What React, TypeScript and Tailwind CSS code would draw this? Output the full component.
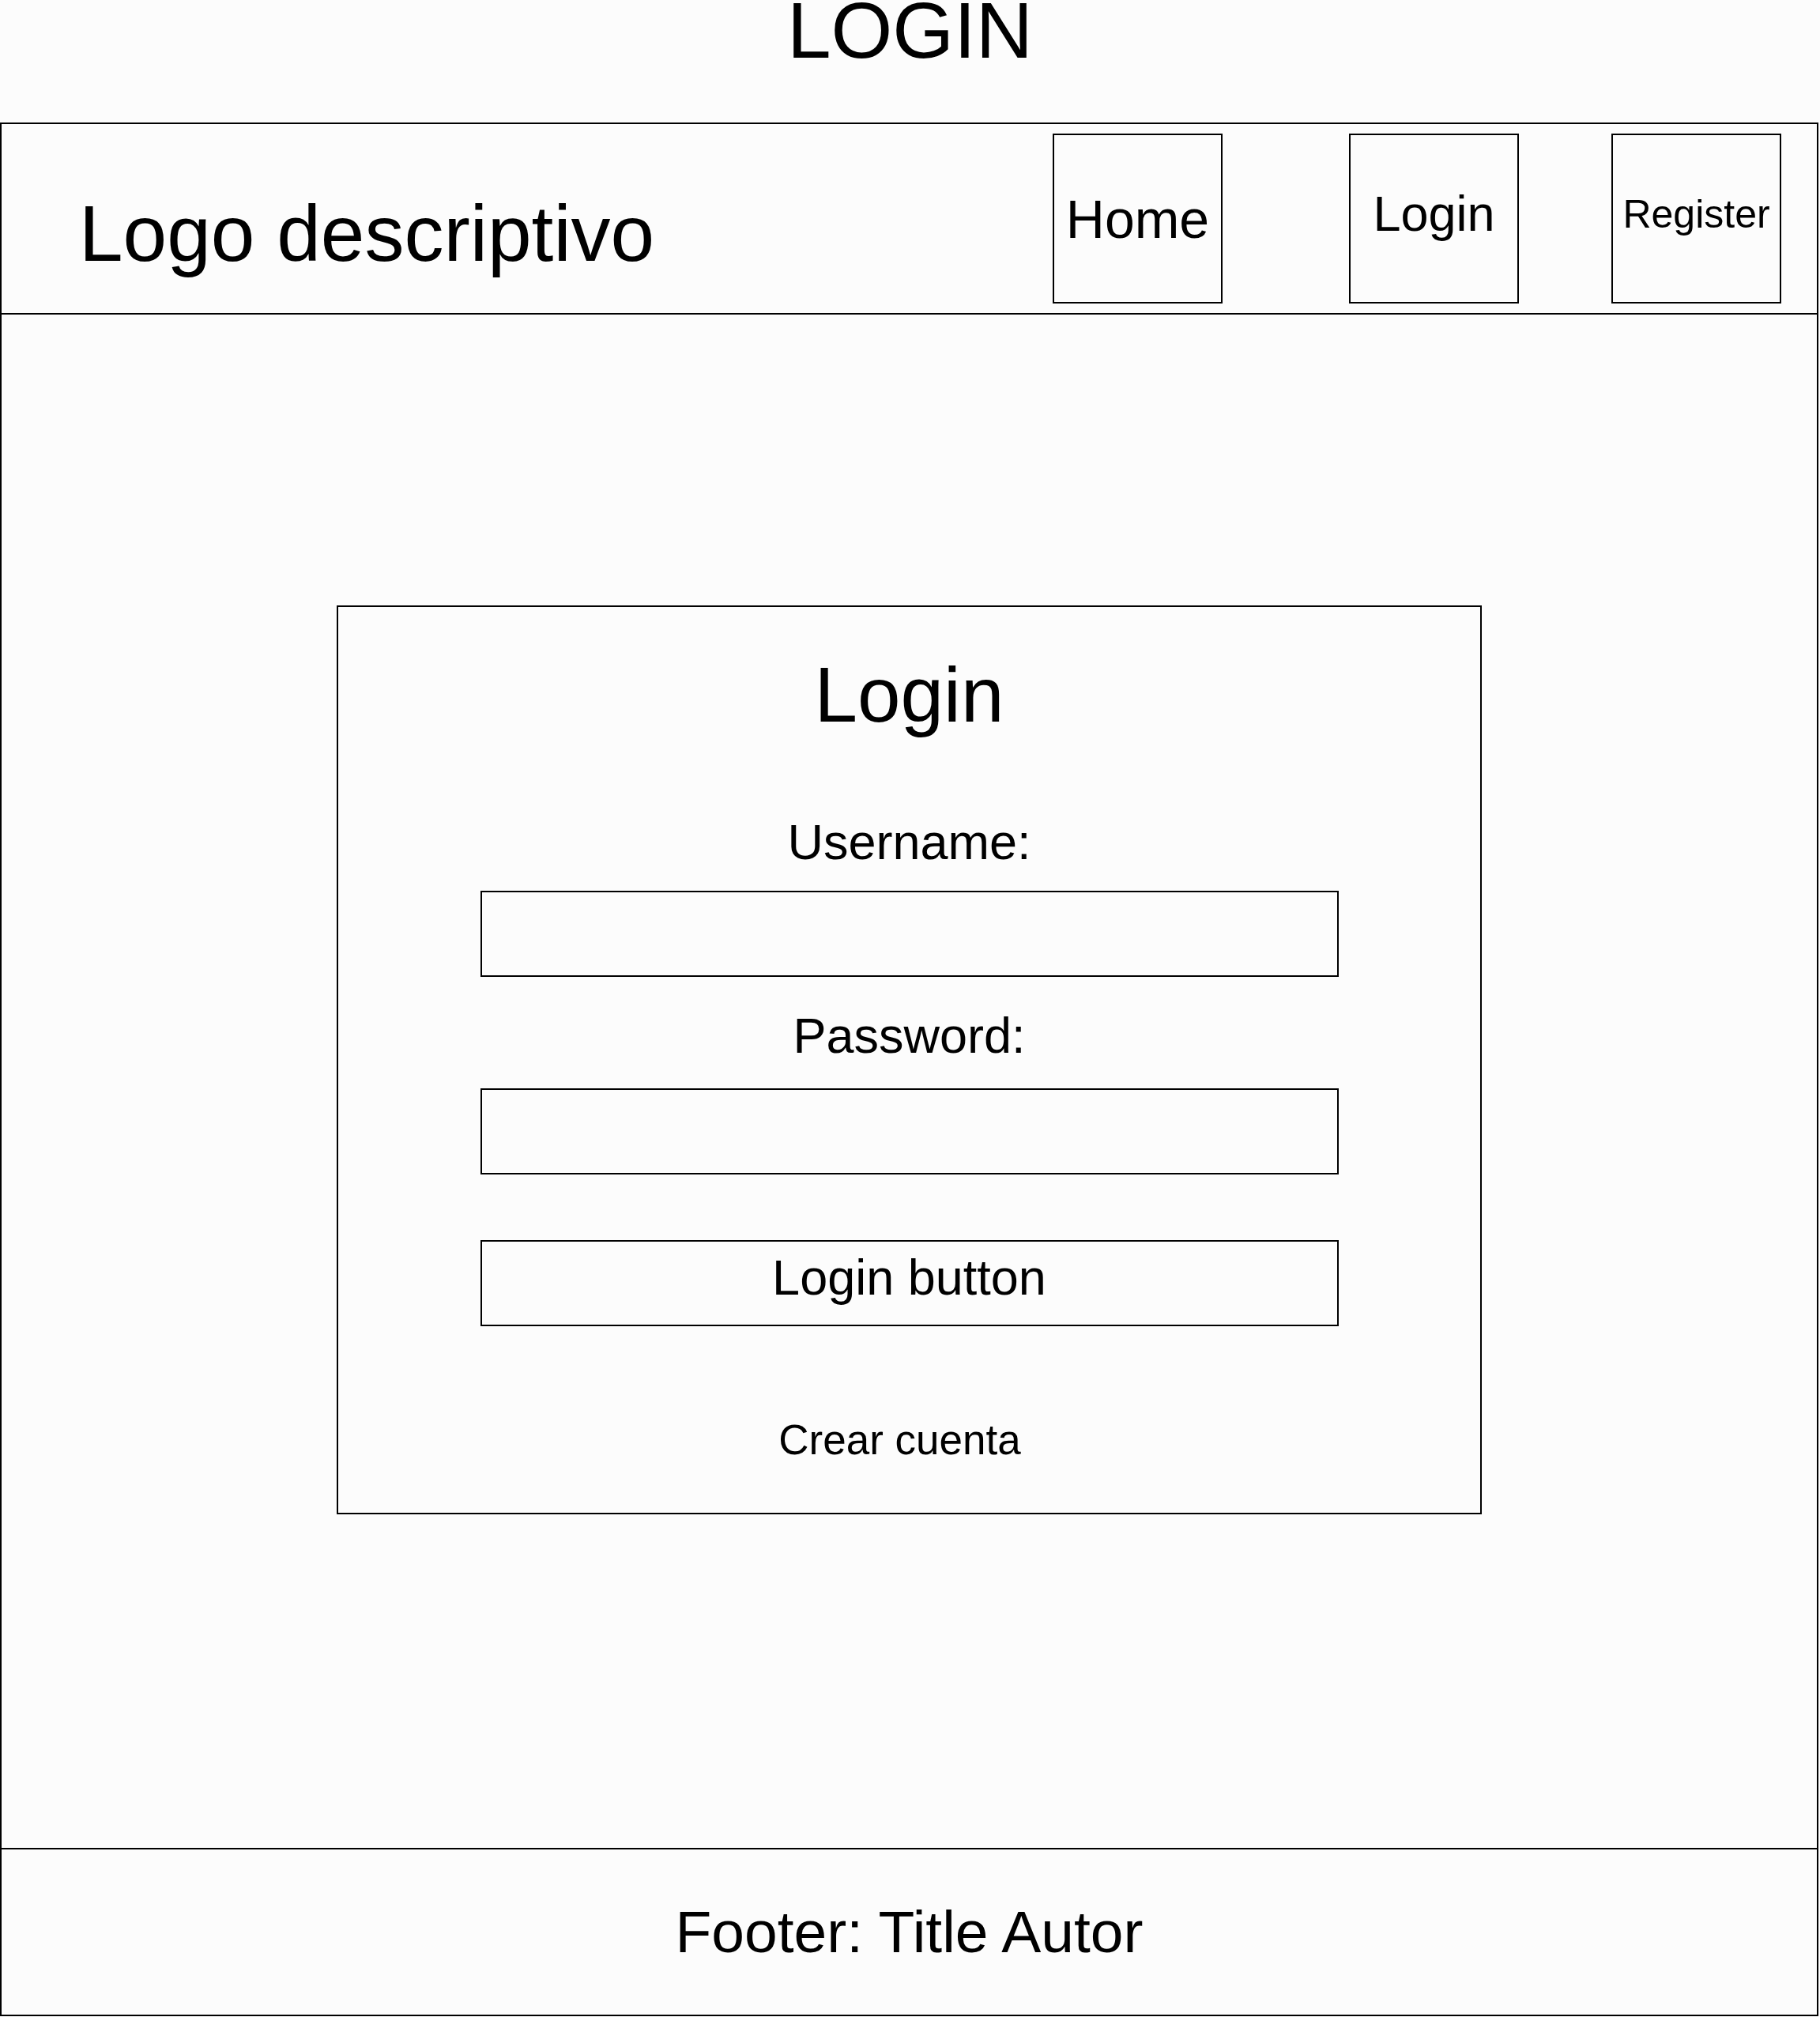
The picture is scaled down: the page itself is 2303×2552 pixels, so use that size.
const font = "font-['Liberation_Sans',Arial,sans-serif]";

function NavBox({ label, size, lift }: { label: string; size: string; lift?: boolean }) {
  return (
    <div
      className={`mt-[12px] flex h-[215px] w-[215px] shrink-0 items-center justify-center border-2 border-black ${
        lift ? "pb-[12px]" : ""
      }`}
    >
      <span className={`${size} leading-none`}>{label}</span>
    </div>
  );
}

function Field() {
  return <div className="h-[109px] w-[1086px] border-2 border-black" />;
}

export default function App() {
  return (
    <div className={`h-[2552px] w-[2303px] bg-[#fcfcfc] text-black ${font}`}>
      <div className="h-[155px] text-center text-[100px] leading-[77px]">LOGIN</div>

      <div className="flex h-[2396px] w-[2301px] flex-col border-2 border-black">
        {/* header */}
        <header className="flex h-[241px] shrink-0 items-start border-b-2 border-black">
          <div className="mt-[88px] pl-[98px] text-[100px] leading-none">Logo descriptivo</div>
          <div className="flex-1" />
          <NavBox label="Home" size="text-[68px]" />
          <div className="ml-[160px]">
            <NavBox label="Login" size="text-[63px]" lift />
          </div>
          <div className="ml-[117px] mr-[45px]">
            <NavBox label="Register" size="text-[50px]" lift />
          </div>
        </header>

        {/* main */}
        <main className="flex flex-1 justify-center pt-[368px]">
          <div className="flex h-[1150px] w-[1449px] flex-col items-center border-2 border-black">
            <h1 className="mt-[62px] text-[98px] leading-none">Login</h1>
            <label className="mt-[106px] text-[63px] leading-none">Username:</label>
            <div className="mt-[30px]">
              <Field />
            </div>
            <label className="mt-[43px] text-[63px] leading-none">Password:</label>
            <div className="mt-[35px]">
              <Field />
            </div>
            <button className="mt-[83px] flex h-[109px] w-[1086px] items-center justify-center border-2 border-black pb-[14px] text-[63px] leading-none">
              Login button
            </button>
            <a className="mt-[117px] pr-[24px] text-[53px] leading-none">Crear cuenta</a>
          </div>
        </main>

        {/* footer */}
        <footer className="flex h-[211px] shrink-0 items-center justify-center border-t-2 border-black text-[75px] leading-none">
          Footer: Title Autor
        </footer>
      </div>
    </div>
  );
}
